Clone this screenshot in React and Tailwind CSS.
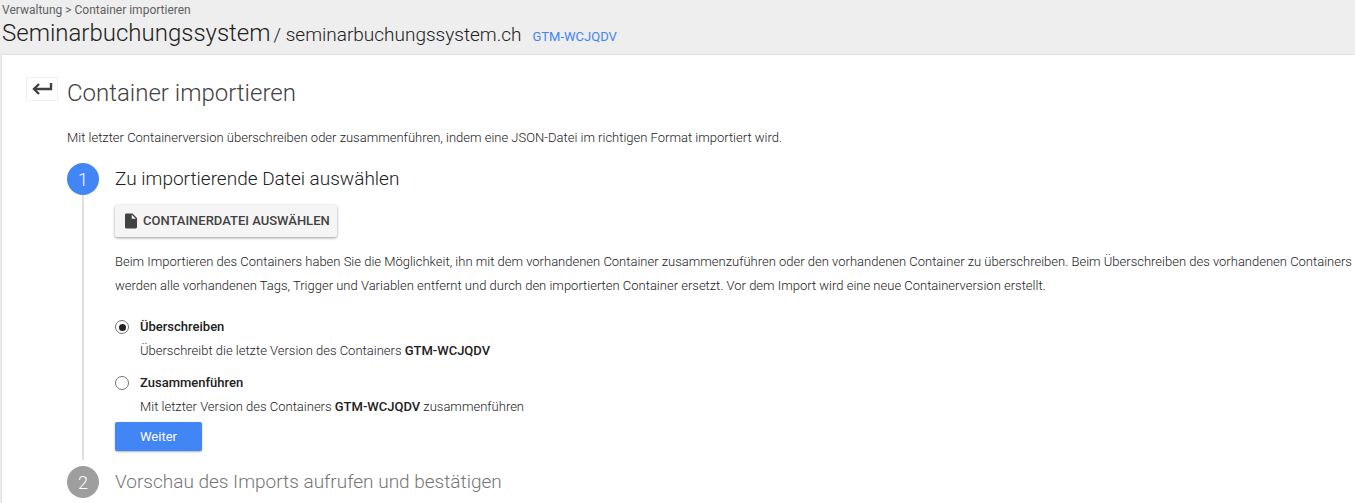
function Radio({ checked }) {
  return (
    <span className="flex h-[14px] w-[14px] shrink-0 items-center justify-center rounded-full border border-[#757575] bg-white">
      {checked && <span className="h-[7px] w-[7px] rounded-full bg-[#212121]" />}
    </span>
  );
}

function Option({ checked, label, children }) {
  return (
    <div>
      <div className="flex h-[20px] items-center gap-[11px]">
        <Radio checked={checked} />
        <span className="text-[13px] font-medium text-[#212121]">{label}</span>
      </div>
      <p className="mt-[4px] ml-[25px] h-[20px] text-[13px] leading-[20px] font-light text-[#212121]">{children}</p>
    </div>
  );
}

export default function App() {
  return (
    <div className="h-[503px] w-[1355px] overflow-hidden bg-[#eeeeee] font-['Roboto',sans-serif] text-[#212121]">
      <header className="h-[55px] pl-[2px]">
        <div className="pt-[3px] text-[12px] leading-[14px] text-[#616161]">Verwaltung &gt; Container importieren</div>
        <div className="flex h-[32px] items-baseline whitespace-nowrap pt-[1px]">
          <span className="text-[24px] leading-[30px] font-light">Seminarbuchungssystem</span>
          <span className="ml-[3px] text-[19px] font-light">/ seminarbuchungssystem.ch</span>
          <span className="ml-[11px] text-[13px] text-[#4285f4]">GTM-WCJQDV</span>
        </div>
      </header>

      <main className="ml-[2px] h-[448px] bg-white pl-[24px] pt-[22px] shadow-[0_0_2px_rgba(0,0,0,0.15)]">
        <div className="flex h-[32px] items-start">
          <button className="flex h-[24px] w-[32px] items-center justify-center border border-[#f1f1f1] bg-white text-[#424242]">
            <svg width="22" height="14" viewBox="0 0 22 14" fill="none" stroke="currentColor" strokeWidth="2.4">
              <path d="M20 1v6H3" />
              <path d="M8 2 3 7l5 5" />
            </svg>
          </button>
          <h1 className="ml-[9px] text-[24px] leading-[32px] font-light text-[#424242]">Container importieren</h1>
        </div>

        <p className="ml-[41px] mt-[19px] h-[20px] text-[13px] leading-[20px] font-light text-[#212121]">
          Mit letzter Containerversion überschreiben oder zusammenführen, indem eine JSON-Datei im richtigen Format importiert wird.
        </p>

        <section className="ml-[41px] mt-[15px] flex">
          <div className="flex w-[48px] shrink-0 flex-col">
            <span className="flex h-[32px] w-[32px] items-center justify-center rounded-full bg-[#4285f4] text-[18px] font-light text-white">1</span>
            <span className="ml-[15px] h-[265px] w-[2px] bg-[#e0e0e0]" />
          </div>
          <div className="min-w-0 flex-1">
            <h2 className="h-[32px] text-[19px] leading-[32px] font-light whitespace-nowrap">Zu importierende Datei auswählen</h2>
            <button className="mt-[10px] flex h-[32px] w-[222px] items-center rounded-[2px] bg-[#f5f5f5] pl-[7px] text-[13px] font-medium whitespace-nowrap text-[#424242] shadow-[0_1px_3px_rgba(0,0,0,0.4)]">
              <svg width="18" height="18" viewBox="0 0 24 24" fill="currentColor" className="mr-[3px]">
                <path d="M6 2c-1.1 0-1.99.9-1.99 2L4 20c0 1.1.89 2 1.99 2H18c1.1 0 2-.9 2-2V8l-6-6H6zm7 7V3.5L18.5 9H13z" />
              </svg>
              CONTAINERDATEI AUSWÄHLEN
            </button>
            <p className="mt-[13px] w-[1240px] text-[13px] leading-[24px] font-light text-[#212121]">
              Beim Importieren des Containers haben Sie die Möglichkeit, ihn mit dem vorhandenen Container zusammenzuführen oder den vorhandenen Container zu überschreiben. Beim Überschreiben des vorhandenen Containers werden alle vorhandenen Tags, Trigger und Variablen entfernt und durch den importierten Container ersetzt. Vor dem Import wird eine neue Containerversion erstellt.
            </p>
            <div className="mt-[19px] flex flex-col gap-[12px]">
              <Option checked label="Überschreiben">
                Überschreibt die letzte Version des Containers <b className="font-medium">GTM-WCJQDV</b>
              </Option>
              <Option label="Zusammenführen">
                Mit letzter Version des Containers <b className="font-medium">GTM-WCJQDV</b> zusammenführen
              </Option>
            </div>
            <button className="mt-[5px] h-[29px] w-[87px] rounded-[2px] bg-[#4285f4] text-[13px] text-white shadow-[0_1px_2px_rgba(0,0,0,0.3)]">Weiter</button>
          </div>
        </section>

        <section className="ml-[41px] mt-[6px] flex items-center">
          <span className="flex h-[32px] w-[32px] items-center justify-center rounded-full bg-[#9e9e9e] text-[18px] font-light text-white">2</span>
          <h2 className="ml-[16px] text-[19px] font-light text-[#757575]">Vorschau des Imports aufrufen und bestätigen</h2>
        </section>
      </main>
    </div>
  );
}
